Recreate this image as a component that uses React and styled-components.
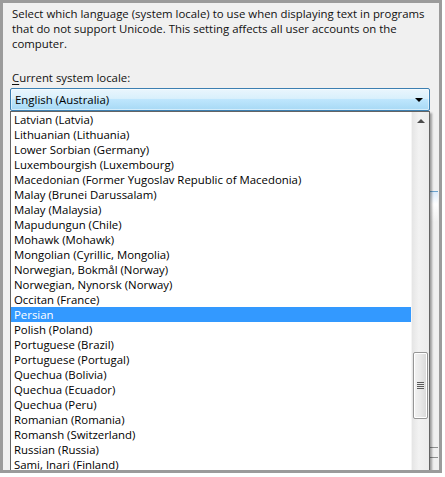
import React from "react";
import styled, { createGlobalStyle } from "styled-components";

const GlobalStyle = createGlobalStyle`
  html, body {
    margin: 0;
    padding: 0;
    background: #ffffff;
  }
  body {
    font-family: "Segoe UI", "Open Sans", "Noto Sans", sans-serif;
    font-size: 11.4px;
    color: #000;
  }
`;

const locales = [
  "Latvian (Latvia)",
  "Lithuanian (Lithuania)",
  "Lower Sorbian (Germany)",
  "Luxembourgish (Luxembourg)",
  "Macedonian (Former Yugoslav Republic of Macedonia)",
  "Malay (Brunei Darussalam)",
  "Malay (Malaysia)",
  "Mapudungun (Chile)",
  "Mohawk (Mohawk)",
  "Mongolian (Cyrillic, Mongolia)",
  "Norwegian, Bokmål (Norway)",
  "Norwegian, Nynorsk (Norway)",
  "Occitan (France)",
  "Persian",
  "Polish (Poland)",
  "Portuguese (Brazil)",
  "Portuguese (Portugal)",
  "Quechua (Bolivia)",
  "Quechua (Ecuador)",
  "Quechua (Peru)",
  "Romanian (Romania)",
  "Romansh (Switzerland)",
  "Russian (Russia)",
  "Sami, Inari (Finland)",
];

// scroll position of the list, as a share of the free track
const scrollShare = 0.7;

export default function App() {
  return (
    <>
      <GlobalStyle />
      <Frame>
        <Dialog>
          <Intro>
            Select which language (system locale) to use when displaying text in
            programs that do not support Unicode. This setting affects all user
            accounts on the computer.
          </Intro>
          <Label>
            <u>C</u>urrent system locale:
          </Label>
          <Combo>
            <ComboBox>
              <span>English (Australia)</span>
              <Caret />
            </ComboBox>
            <Underneath>
              <SideButton />
              <SideRules>
                <Rule />
                <Rule />
              </SideRules>
            </Underneath>
            <DropList>
              <Items>
                {locales.map((name) => (
                  <Item key={name} $selected={name === "Persian"}>
                    {name}
                  </Item>
                ))}
              </Items>
              <ScrollBar>
                <ArrowButton>
                  <UpArrow />
                </ArrowButton>
                <Track style={{ paddingTop: `${Math.round(scrollShare * 318)}px` }}>
                  <Thumb>
                    <Grip />
                  </Thumb>
                </Track>
              </ScrollBar>
            </DropList>
          </Combo>
        </Dialog>
      </Frame>
    </>
  );
}

const Frame = styled.div`
  width: 445px;
  height: 477px;
  overflow: hidden;
  background: #ffffff;
`;
const Dialog = styled.div`
  box-sizing: border-box;
  width: 442px;
  height: 473px;
  border: 3px solid #9b9b9b;
  background: #f0f0f0;
  padding: 3px 0 0 9px;
  overflow: hidden;
`;
const Intro = styled.p`
  margin: 0;
  width: 424px;
  line-height: 15px;
  color: #111;
`;
const Label = styled.div`
  margin-top: 19px;
  line-height: 15px;
  color: #111;

  u {
    text-decoration-thickness: 1px;
    text-underline-offset: 2px;
  }
`;
const Combo = styled.div`
  position: relative;
  margin-top: 3px;
  margin-left: -2px;
  width: 420px;
`;
const ComboBox = styled.div`
  box-sizing: border-box;
  height: 23px;
  display: flex;
  align-items: center;
  justify-content: space-between;
  padding: 0 6px 0 4px;
  border: 1px solid #3c7fb1;
  border-radius: 2px;
  background: linear-gradient(
    to bottom,
    #eaf6fd 0%,
    #d9f0fc 45%,
    #bee6fd 50%,
    #a7d9f5 100%
  );
  box-shadow: inset 0 0 0 1px rgba(255, 255, 255, 0.5);
  color: #000;
`;
const Caret = styled.span`
  width: 0;
  height: 0;
  border-left: 4px solid transparent;
  border-right: 4px solid transparent;
  border-top: 4px solid #000;
`;
const Underneath = styled.div`
  display: flex;
  flex-direction: column;
  align-items: flex-end;
  margin-right: -8px;
  padding-top: 80px;
`;
const SideButton = styled.div`
  width: 28px;
  height: 30px;
  border-top: 1px solid #6ba3cf;
  background: linear-gradient(to bottom, #dcecfc, #ffffff 40%, #f0f0f0);
`;
const SideRules = styled.div`
  display: flex;
  flex-direction: column;
  gap: 9px;
  margin-top: 225px;
`;
const Rule = styled.div`
  width: 28px;
  height: 1px;
  background: #8e8f8f;
`;
const DropList = styled.div`
  position: absolute;
  top: 23px;
  left: 0;
  box-sizing: border-box;
  width: 420px;
  height: 370px;
  display: flex;
  background: #ffffff;
  border: 1px solid #646464;
  box-shadow: 2px 2px 2px rgba(0, 0, 0, 0.35);
  z-index: 2;
`;
const Items = styled.div`
  flex: 1;
  overflow: hidden;
`;
const Item = styled.div`
  height: 15px;
  line-height: 15px;
  padding-left: 3px;
  white-space: nowrap;
  background: ${(p) => (p.$selected ? "#3399ff" : "transparent")};
  color: ${(p) => (p.$selected ? "#ffffff" : "#000000")};
`;
const ScrollBar = styled.div`
  width: 17px;
  display: flex;
  flex-direction: column;
  background: linear-gradient(to right, #e5e5e5, #f2f2f2 40%, #ececec);
  border-left: 1px solid #f5f5f5;
`;
const ArrowButton = styled.div`
  height: 17px;
  display: flex;
  align-items: center;
  justify-content: center;
`;
const UpArrow = styled.span`
  width: 0;
  height: 0;
  border-left: 4px solid transparent;
  border-right: 4px solid transparent;
  border-bottom: 4px solid #4d4d4d;
`;
const Track = styled.div`
  flex: 1;
  display: flex;
  flex-direction: column;
  align-items: center;
`;
const Thumb = styled.div`
  box-sizing: border-box;
  width: 15px;
  height: 67px;
  border: 1px solid #969696;
  border-radius: 2px;
  background: linear-gradient(to right, #f3f3f3, #e8e8e8 50%, #d8d8d8);
  box-shadow: inset 0 0 0 1px #ffffff;
  display: flex;
  align-items: center;
  justify-content: center;
`;
const Grip = styled.span`
  width: 7px;
  height: 7px;
  background: repeating-linear-gradient(
    to bottom,
    #5a5a5a 0,
    #5a5a5a 1px,
    #eaeaea 1px,
    #eaeaea 2px
  );
`;
